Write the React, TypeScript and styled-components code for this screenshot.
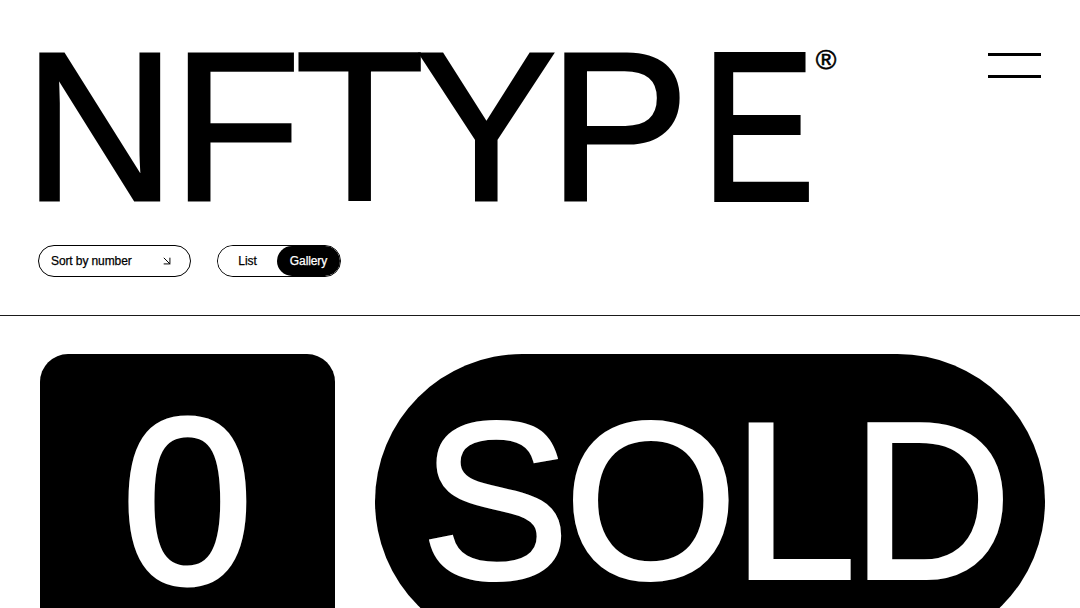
import styled, { createGlobalStyle } from 'styled-components';
import { ArrowDownRight } from 'lucide-react';

const GlobalStyle = createGlobalStyle`
  html,
  body {
    margin: 0;
    padding: 0;
    overflow: hidden;
    background: #ffffff;
  }
  body {
    font-family: 'Liberation Sans', Arial, sans-serif;
    color: #000000;
  }
`;

const App = () => {
  return (
    <>
      <GlobalStyle />
      <StPage>
        <StHeader>
          <StTopRow>
            <StBrand>
              <StTitle>
                <StLetter $track={-4}>N</StLetter>
                <StLetter $track={-5.5}>F</StLetter>
                TY
                <StLetter $track={12.5}>P</StLetter>
                <StLetter $squeeze={0.8}>E</StLetter>
              </StTitle>
              <StReg>®</StReg>
            </StBrand>
            <StMenuButton aria-label="menu">
              <span />
              <span />
            </StMenuButton>
          </StTopRow>
          <StControls>
            <StSortButton>
              <span>Sort by number</span>
              <ArrowDownRight size={14} strokeWidth={1.7} />
            </StSortButton>
            <StToggle>
              <StToggleItem $active={false}>List</StToggleItem>
              <StToggleItem $active>Gallery</StToggleItem>
            </StToggle>
          </StControls>
        </StHeader>
        <StGallery>
          <StNumberCard>
            <span>0</span>
          </StNumberCard>
          <StSoldPill>
            <span>SOLD</span>
          </StSoldPill>
        </StGallery>
      </StPage>
    </>
  );
};

export default App;

const StPage = styled.main`
  width: 100%;
  height: 608px;
  overflow: hidden;
`;

const StHeader = styled.header`
  padding: 24px 39px 38px 40px;
  border-bottom: 1px solid #1a1a1a;
`;

const StTopRow = styled.div`
  display: flex;
  justify-content: space-between;
  align-items: flex-start;
`;

const StBrand = styled.div`
  display: flex;
  align-items: flex-start;
`;

const StTitle = styled.h1`
  margin: -2px 0 0 -16.5px;

  font-size: 211px;
  font-weight: 400;
  line-height: 1;
  letter-spacing: -8.2px;
  font-kerning: none;
  white-space: nowrap;
  -webkit-text-stroke: 3px #000000;
`;

const StLetter = styled.span<{ $track?: number; $squeeze?: number }>`
  display: inline-block;
  ${({ $track }) => ($track !== undefined ? `letter-spacing: ${$track}px;` : '')}
  ${({ $squeeze }) =>
    $squeeze !== undefined
      ? `transform: scaleX(${$squeeze}); transform-origin: left center; -webkit-text-stroke: 4px #000000;`
      : ''}
`;

const StReg = styled.span`
  margin: 22px 0 0 -18.5px;

  font-size: 28px;
  line-height: 1;
  -webkit-text-stroke: 0.6px #000000;
`;

const StMenuButton = styled.button`
  display: flex;
  flex-direction: column;
  gap: 19px;

  width: 53px;
  margin-top: 29px;
  padding: 0;

  border: none;
  background: none;

  & > span {
    display: block;
    height: 3px;
    background: #000000;
  }
`;

const StControls = styled.div`
  display: flex;
  align-items: center;
  gap: 26px;

  margin-top: 12px;
  margin-left: -2px;
`;

const StSortButton = styled.button`
  display: flex;
  justify-content: space-between;
  align-items: center;

  width: 153px;
  height: 32px;
  padding: 0 16px 0 12px;

  border: 1.5px solid #000000;
  border-radius: 999px;
  background: #ffffff;
  color: #000000;

  font-family: 'Liberation Sans', Arial, sans-serif;
  font-size: 12px;
  letter-spacing: -0.1px;
  -webkit-text-stroke: 0.25px #000000;
`;

const StToggle = styled.div`
  display: flex;

  width: 124px;
  height: 32px;
  box-sizing: border-box;
  overflow: hidden;

  border: 1.5px solid #000000;
  border-radius: 999px;
`;

const StToggleItem = styled.button<{ $active: boolean }>`
  display: flex;
  justify-content: center;
  align-items: center;
  flex: ${({ $active }) => ($active ? '0 0 63px' : '1')};

  padding: 0;

  border: none;
  border-radius: 999px;
  background: ${({ $active }) => ($active ? '#000000' : '#ffffff')};
  color: ${({ $active }) => ($active ? '#ffffff' : '#000000')};

  font-family: 'Liberation Sans', Arial, sans-serif;
  font-size: 12px;
  letter-spacing: -0.1px;
  -webkit-text-stroke: 0.25px ${({ $active }) => ($active ? '#ffffff' : '#000000')};
`;

const StGallery = styled.section`
  display: flex;
  gap: 40px;

  padding: 38px 35px 0 40px;
`;

const StNumberCard = styled.div`
  display: flex;
  justify-content: center;
  align-items: center;

  flex: 0 0 295px;
  height: 295px;

  border-radius: 28px;
  background: #000000;
  color: #ffffff;

  font-size: 236px;
  line-height: 0.76;

  & > span {
    -webkit-text-stroke: 5px #ffffff;
  }
`;

const StSoldPill = styled.div`
  display: flex;
  justify-content: center;
  align-items: center;

  flex: 0 0 670px;
  height: 295px;
  padding: 0 0 0 8px;
  box-sizing: border-box;

  border-radius: 148px;
  background: #000000;
  color: #ffffff;

  font-size: 222px;
  line-height: 0.76;
  letter-spacing: -4.7px;

  & > span {
    -webkit-text-stroke: 4px #ffffff;
  }
`;
